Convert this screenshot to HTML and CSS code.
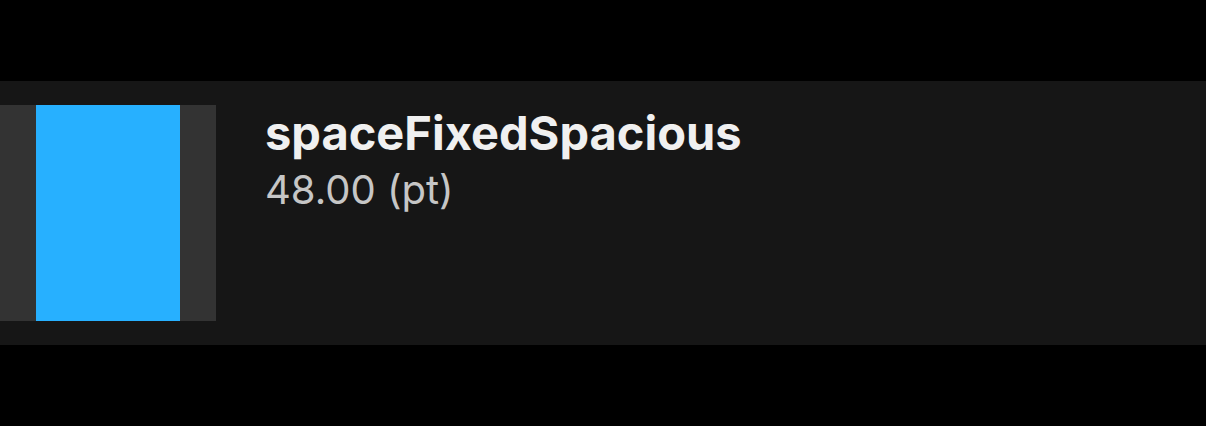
FILE: index.html
```html
<!DOCTYPE html>
<html>
<head>
<meta charset="utf-8">
<link rel="stylesheet" href="styles.css">
</head>
<body>
<div class="page">
  <div class="row">
    <div class="swatch"><div class="fill"></div></div>
    <div class="info">
      <div class="title">spaceFixedSpacious</div>
      <div class="value">48.00 (pt)</div>
    </div>
  </div>
</div>
</body>
</html>
```
FILE: styles.css
```css
html, body {
  margin: 0;
  padding: 0;
  background: #000;
}
.page {
  width: 1206px;
  height: 426px;
  padding-top: 81px;
  box-sizing: border-box;
  font-family: Inter, "Noto Sans", sans-serif;
}
.row {
  height: 264px;
  background: #161616;
  display: flex;
  align-items: flex-start;
  padding-top: 24px;
  box-sizing: border-box;
}
.swatch {
  width: 216px;
  height: 216px;
  background: #333333;
  display: flex;
  justify-content: center;
}
.fill {
  width: 144px;
  height: 216px;
  background: #27b0ff;
}
.info {
  margin-left: 49px;
  display: flex;
  flex-direction: column;
}
.title {
  color: #f0f0f0;
  font-weight: 700;
  font-size: 47px;
  line-height: 56px;
}
.value {
  color: #c6c6c6;
  font-size: 40px;
  line-height: 57px;
}
```
